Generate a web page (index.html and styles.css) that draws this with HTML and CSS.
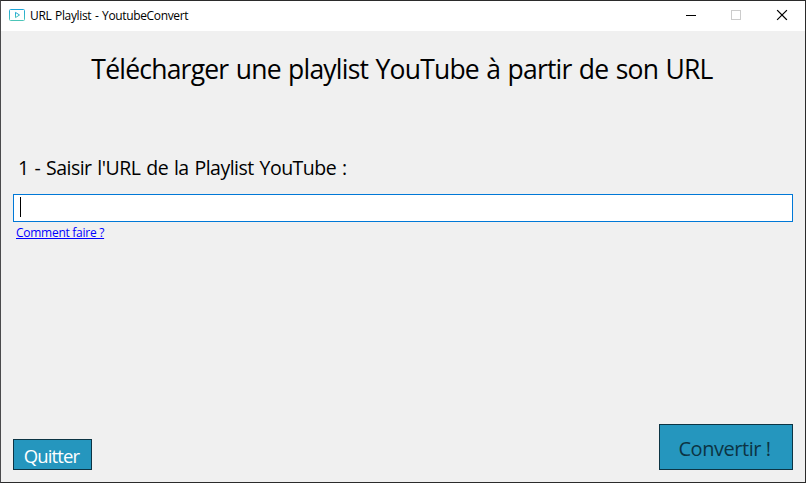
FILE: index.html
```html
<!DOCTYPE html>
<html lang="fr">
<head>
<meta charset="utf-8">
<title>URL Playlist - YoutubeConvert</title>
<link rel="stylesheet" href="styles.css">
</head>
<body>
<div class="window">
  <header class="titlebar">
    <svg class="app-icon" width="16" height="12" viewBox="0 0 16 12" fill="none">
      <defs><linearGradient id="tint" x1="0" y1="0" x2="0" y2="1"><stop offset="0" stop-color="#1ca5d8"/><stop offset="1" stop-color="#4cc5b8"/></linearGradient></defs>
      <rect x=".5" y=".5" width="15" height="11" rx="1" stroke="url(#tint)"/>
      <path d="M6.500 3.4V8.6L10.500 6Z" stroke="url(#tint)"/>
    </svg>
    <span class="caption"><span>URL Playlist - YoutubeConvert</span></span>
    <div class="controls">
      <svg width="46" height="29" viewBox="0 0 46 29" shape-rendering="crispEdges"><path d="M18 14.5H28" stroke="#000"/></svg>
      <svg width="46" height="29" viewBox="0 0 46 29" fill="none" shape-rendering="crispEdges"><rect x="17.500" y="9.500" width="9" height="9" stroke="#ccc"/></svg>
      <svg width="46" height="29" viewBox="0 0 46 29"><path d="M17.500 9.500L26.500 18.500M26.500 9.500L17.500 18.500" stroke="#000" stroke-width="1.150" stroke-linecap="square"/></svg>
    </div>
  </header>
  <main class="content">
    <h1><span>Télécharger une playlist YouTube à partir de son URL</span></h1>
    <label for="url"><span>1 - Saisir l'URL de la Playlist YouTube :</span></label>
    <div class="field" id="url"><i class="caret"></i></div>
    <a class="help" href="#"><span>Comment faire ?</span></a>
    <footer>
      <button class="quit"><span>Quitter</span></button>
      <button class="convert"><span>Convertir !</span></button>
    </footer>
  </main>
</div>
</body>
</html>
```
FILE: styles.css
```css
* { box-sizing: border-box; }
body { margin: 0; font-family: "Open Sans", "Noto Sans", sans-serif; color: #000; }
.window {
  width: 806px; height: 483px; display: flex; flex-direction: column;
  background: #f0f0f0; border: 1px solid #2b2b2b; border-left-color: #4a4a4c;
}
.titlebar { height: 30px; flex: none; display: flex; align-items: center; background: #fff; padding-left: 8px; }
.app-icon { flex: none; margin-top: -2px; }
.caption { font-size: 12px; line-height: 16px; margin-left: 5px; white-space: nowrap; letter-spacing: -0.35px; word-spacing: 0.9px; }
.controls { display: flex; margin: 0 -1px 0 auto; align-self: flex-start; }
.controls svg { display: block; }
.content { flex: 1; display: flex; flex-direction: column; padding: 0 12px 12px; }
h1 { margin: 20px 0 0; font-weight: 400; font-size: 26.500px; line-height: 36px; text-align: center; white-space: nowrap; letter-spacing: -0.78px; word-spacing: 1.2px; padding-right: 2px; }
label { display: block; margin: 67px 0 0 5px; font-size: 19.500px; line-height: 28px; white-space: nowrap; letter-spacing: -0.5px; word-spacing: 1.2px; }
.field { width: 780px; height: 28px; margin-top: 12px; border: 1px solid #0078d7; background: #fff; padding: 2px 0 0 6px; }
.caret { display: block; width: 1px; height: 20px; background: #000; }
.help { align-self: flex-start; margin: 3px 0 0 3px; color: #00f; font-size: 12px; line-height: 16px; white-space: nowrap; letter-spacing: -0.27px; }
footer { margin-top: auto; display: flex; justify-content: space-between; align-items: flex-end; }
button { font-family: inherit; padding: 0; background: #2596be; border: 1px solid #0c3444; border-radius: 0; white-space: nowrap; }
.quit { width: 79px; height: 31px; color: #fff; font-size: 18.500px; line-height: 26px; padding: 3px 2px 0 0; letter-spacing: -0.85px; }
.convert { width: 134px; height: 46px; color: #0c3444; font-size: 20px; line-height: 28px; padding: 4px 3px 0 0; letter-spacing: -0.45px; }
```
